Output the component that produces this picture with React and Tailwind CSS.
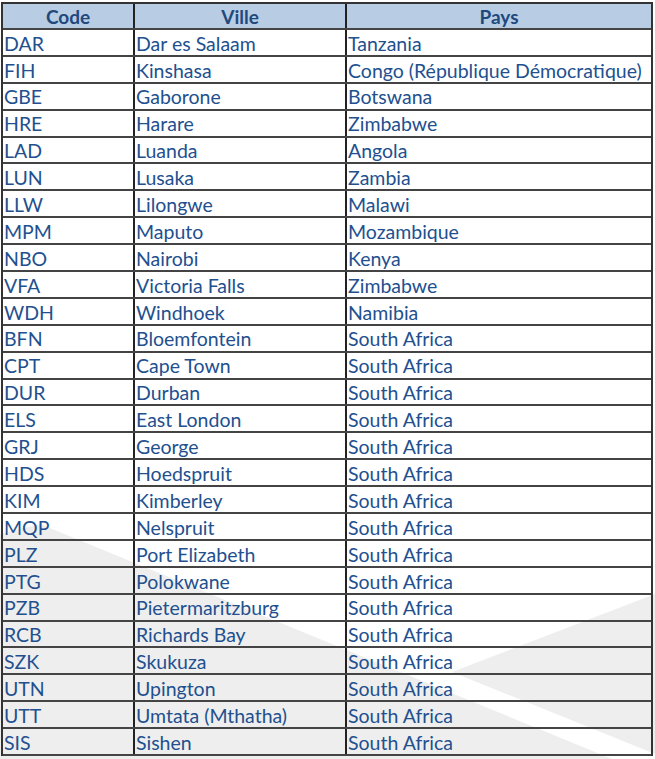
import React from 'react';

const airports = [
  ['DAR', 'Dar es Salaam', 'Tanzania'],
  ['FIH', 'Kinshasa', 'Congo (République Démocratique)'],
  ['GBE', 'Gaborone', 'Botswana'],
  ['HRE', 'Harare', 'Zimbabwe'],
  ['LAD', 'Luanda', 'Angola'],
  ['LUN', 'Lusaka', 'Zambia'],
  ['LLW', 'Lilongwe', 'Malawi'],
  ['MPM', 'Maputo', 'Mozambique'],
  ['NBO', 'Nairobi', 'Kenya'],
  ['VFA', 'Victoria Falls', 'Zimbabwe'],
  ['WDH', 'Windhoek', 'Namibia'],
  ['BFN', 'Bloemfontein', 'South Africa'],
  ['CPT', 'Cape Town', 'South Africa'],
  ['DUR', 'Durban', 'South Africa'],
  ['ELS', 'East London', 'South Africa'],
  ['GRJ', 'George', 'South Africa'],
  ['HDS', 'Hoedspruit', 'South Africa'],
  ['KIM', 'Kimberley', 'South Africa'],
  ['MQP', 'Nelspruit', 'South Africa'],
  ['PLZ', 'Port Elizabeth', 'South Africa'],
  ['PTG', 'Polokwane', 'South Africa'],
  ['PZB', 'Pietermaritzburg', 'South Africa'],
  ['RCB', 'Richards Bay', 'South Africa'],
  ['SZK', 'Skukuza', 'South Africa'],
  ['UTN', 'Upington', 'South Africa'],
  ['UTT', 'Umtata (Mthatha)', 'South Africa'],
  ['SIS', 'Sishen', 'South Africa'],
];

// faint chevron watermark sitting behind the table
const Watermark = () => (
  <svg className="absolute inset-0 pointer-events-none" width="655" height="759" viewBox="0 0 655 759">
    <polygon points="0,534 40,524 612,759 0,759" fill="#eeeeee" />
    <polygon points="452,672 655,594 655,754" fill="#eeeeee" />
  </svg>
);

const App = () => {
  return (
    <div className="relative w-[655px] h-[759px] bg-white overflow-hidden font-['Lato',_'Liberation_Sans',_sans-serif]">
      <Watermark />

      <div className="relative ml-px mt-[2px] w-[652px] border-x-2 border-t-2 border-[#333]">
        <div className="grid grid-cols-[132px_212px_1fr] h-[26px] bg-[#b8cce4] border-b-2 border-[#444] text-[19px] font-bold text-[#1f497d] leading-none">
          <div className="flex items-center justify-center border-r-2 border-[#222]">Code</div>
          <div className="flex items-center justify-center border-r-2 border-[#222]">Ville</div>
          <div className="flex items-center justify-center">Pays</div>
        </div>

        {airports.map(([code, city, country]) => (
          <div
            key={code}
            className="grid grid-cols-[132px_212px_1fr] h-[26.9px] border-b-2 border-[#444] text-[19.5px] text-[#22508f] leading-none"
          >
            <div className="flex items-center pl-[1px] pt-[2px] border-r-2 border-[#222]">{code}</div>
            <div className="flex items-center pl-[1px] pt-[2px] border-r-2 border-[#222]">{city}</div>
            <div className="flex items-center pl-[1px] pt-[2px] whitespace-nowrap">{country}</div>
          </div>
        ))}
      </div>
    </div>
  );
};

export default App;
